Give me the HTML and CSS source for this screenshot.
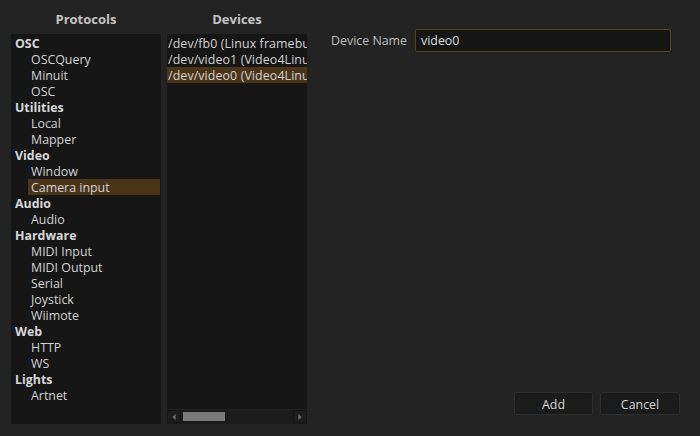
FILE: index.html
```html
<!DOCTYPE html>
<html>
<head>
<meta charset="utf-8">
<link rel="stylesheet" href="styles.css">
</head>
<body>
<div class="app">
  <div class="col col-protocols">
    <div class="col-title">Protocols</div>
    <div class="panel tree">
      <div class="row cat">OSC</div>
      <div class="row item">OSCQuery</div>
      <div class="row item">Minuit</div>
      <div class="row item">OSC</div>
      <div class="row cat">Utilities</div>
      <div class="row item">Local</div>
      <div class="row item">Mapper</div>
      <div class="row cat">Video</div>
      <div class="row item">Window</div>
      <div class="row item selected">Camera input</div>
      <div class="row cat">Audio</div>
      <div class="row item">Audio</div>
      <div class="row cat">Hardware</div>
      <div class="row item">MIDI Input</div>
      <div class="row item">MIDI Output</div>
      <div class="row item">Serial</div>
      <div class="row item">Joystick</div>
      <div class="row item">Wiimote</div>
      <div class="row cat">Web</div>
      <div class="row item">HTTP</div>
      <div class="row item">WS</div>
      <div class="row cat">Lights</div>
      <div class="row item">Artnet</div>
    </div>
  </div>
  <div class="col col-devices">
    <div class="col-title">Devices</div>
    <div class="panel list">
      <div class="list-rows">
        <div class="row dev">/dev/fb0 (Linux framebuffer)</div>
        <div class="row dev">/dev/video1 (Video4Linux)</div>
        <div class="row dev selected">/dev/video0 (Video4Linux)</div>
      </div>
      <div class="hscroll">
        <div class="arrow arrow-left"><svg width="14" height="12" viewBox="0 0 14 12"><path d="M5 6 L9 2.5 L9 9.5 Z" fill="#6a6a6a"/></svg></div>
        <div class="track"><div class="handle"></div></div>
        <div class="arrow arrow-right"><svg width="14" height="12" viewBox="0 0 14 12"><path d="M9 6 L5 2.5 L5 9.5 Z" fill="#6a6a6a"/></svg></div>
      </div>
    </div>
  </div>
  <div class="form">
    <div class="field">
      <div class="label">Device Name</div>
      <div class="input">video0</div>
    </div>
    <div class="buttons">
      <div class="btn">Add</div>
      <div class="btn">Cancel</div>
    </div>
  </div>
</div>
</body>
</html>
```
FILE: styles.css
```css
html, body {
  margin: 0;
  padding: 0;
  background: #232323;
  width: 700px;
  height: 436px;
  overflow: hidden;
}
body {
  font-family: "Open Sans", "DejaVu Sans", sans-serif;
  font-size: 12.4px;
  color: #d2d2d2;
}
.app {
  display: flex;
  height: 436px;
  padding: 0 0 12px 11px;
  box-sizing: border-box;
}
.col {
  display: flex;
  flex-direction: column;
}
.col-protocols { width: 150px; }
.col-devices { width: 140px; margin-left: 6px; }
.col-title {
  height: 34px;
  line-height: 38px;
  text-align: center;
  font-weight: bold;
  font-size: 13px;
  color: #c4c4c4;
}
.panel {
  flex: 1;
  background: #161616;
  padding-top: 1px;
  box-sizing: border-box;
  overflow: hidden;
}
.row {
  height: 16px;
  box-sizing: border-box;
  padding-top: 1px;
  line-height: 15px;
  white-space: nowrap;
  overflow: hidden;
}
.cat {
  font-weight: bold;
  padding-left: 4px;
  color: #d8d8d8;
}
.item {
  margin-left: 17px;
  padding-left: 3px;
  margin-right: 1px;
}
.selected {
  background: #4a3519;
}
.list {
  display: flex;
  flex-direction: column;
}
.list-rows {
  flex: 1;
  overflow: hidden;
}
.dev {
  padding-left: 1px;
  letter-spacing: 0.1px;
}
.hscroll {
  height: 14px;
  display: flex;
  background: #1c1c1c;
  border-top: 1px solid #202020;
}
.arrow {
  width: 14px;
  height: 13px;
  background: #1d1d1d;
  border: 1px solid #151515;
  box-sizing: border-box;
  display: flex;
  align-items: center;
  justify-content: center;
}
.track {
  flex: 1;
  padding: 2px;
  background: #1b1b1b;
}
.handle {
  width: 42px;
  height: 9px;
  background: #7a7a7a;
}
.form {
  flex: 1;
  display: flex;
  flex-direction: column;
  justify-content: space-between;
  padding: 29px 20px 9px 24px;
}
.field {
  display: flex;
  align-items: center;
}
.label {
  width: 84px;
  color: #bdbdbd;
}
.input {
  width: 256px;
  height: 23px;
  box-sizing: border-box;
  background: #161616;
  border: 1px solid #5a4218;
  border-radius: 2px;
  padding-left: 5px;
  line-height: 21px;
  color: #dedede;
}
.buttons {
  display: flex;
  justify-content: flex-end;
  gap: 7px;
}
.btn {
  width: 80px;
  height: 23px;
  box-sizing: border-box;
  background: #1b1b1b;
  border: 1px solid #2e2e2e;
  border-radius: 2px;
  text-align: center;
  line-height: 23px;
  color: #d6d6d6;
}
.btn:first-child { width: 79px; }
```
